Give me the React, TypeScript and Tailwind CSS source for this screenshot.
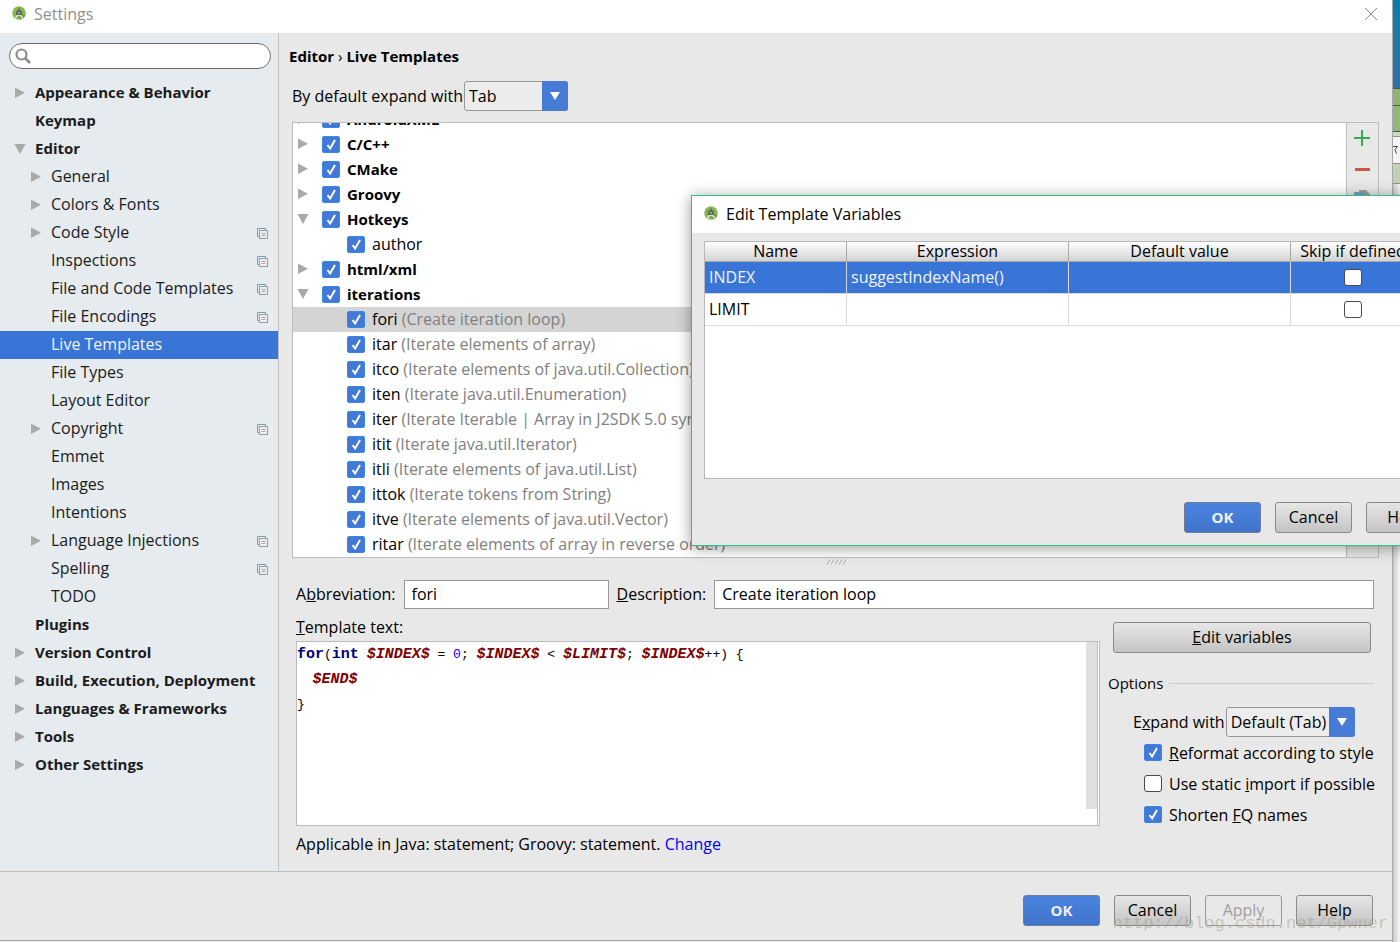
import type { ReactNode } from "react";

interface NavItem {
  label: string;
  level?: 1;
  arrow?: "right" | "down";
  shared?: boolean;
  selected?: boolean;
}

interface TemplateRow {
  label: string;
  note?: string;
  group?: "right" | "down";
  selected?: boolean;
}

const navItems: NavItem[] = [
  { label: "Appearance & Behavior", arrow: "right" },
  { label: "Keymap" },
  { label: "Editor", arrow: "down" },
  { label: "General", level: 1, arrow: "right" },
  { label: "Colors & Fonts", level: 1, arrow: "right" },
  { label: "Code Style", level: 1, arrow: "right", shared: true },
  { label: "Inspections", level: 1, shared: true },
  { label: "File and Code Templates", level: 1, shared: true },
  { label: "File Encodings", level: 1, shared: true },
  { label: "Live Templates", level: 1, selected: true },
  { label: "File Types", level: 1 },
  { label: "Layout Editor", level: 1 },
  { label: "Copyright", level: 1, arrow: "right", shared: true },
  { label: "Emmet", level: 1 },
  { label: "Images", level: 1 },
  { label: "Intentions", level: 1 },
  { label: "Language Injections", level: 1, arrow: "right", shared: true },
  { label: "Spelling", level: 1, shared: true },
  { label: "TODO", level: 1 },
  { label: "Plugins" },
  { label: "Version Control", arrow: "right" },
  { label: "Build, Execution, Deployment", arrow: "right" },
  { label: "Languages & Frameworks", arrow: "right" },
  { label: "Tools", arrow: "right" },
  { label: "Other Settings", arrow: "right" },
];

const templates: TemplateRow[] = [
  { label: "AndroidXML", group: "right" },
  { label: "C/C++", group: "right" },
  { label: "CMake", group: "right" },
  { label: "Groovy", group: "right" },
  { label: "Hotkeys", group: "down" },
  { label: "author" },
  { label: "html/xml", group: "right" },
  { label: "iterations", group: "down" },
  { label: "fori", note: "(Create iteration loop)", selected: true },
  { label: "itar", note: "(Iterate elements of array)" },
  { label: "itco", note: "(Iterate elements of java.util.Collection)" },
  { label: "iten", note: "(Iterate java.util.Enumeration)" },
  { label: "iter", note: "(Iterate Iterable | Array in J2SDK 5.0 syntax)" },
  { label: "itit", note: "(Iterate java.util.Iterator)" },
  { label: "itli", note: "(Iterate elements of java.util.List)" },
  { label: "ittok", note: "(Iterate tokens from String)" },
  { label: "itve", note: "(Iterate elements of java.util.Vector)" },
  { label: "ritar", note: "(Iterate elements of array in reverse order)" },
];

const variables = [
  { name: "INDEX", expression: "suggestIndexName()", selected: true },
  { name: "LIMIT", expression: "", selected: false },
];

function StudioIcon() {
  return (
    <svg className="h-4 w-4 shrink-0" viewBox="0 0 16 16" aria-hidden="true">
      <circle cx="8" cy="7" r="6.800" fill="#86b84f" />
      <path d="M8 7 14.400 9A7 7 0 0 1 10 13.600L6 9z" fill="#6f9f43" />
      <path d="M5 7a3 3 0 0 1 6 0v2H5z" fill="#5b6b5c" />
      <path d="M8 2.500v2" stroke="#4b5948" strokeWidth="1.200" />
      <circle cx="8" cy="6.800" r=".9" fill="#b9c4b4" />
      <path
        d="M6.500 9 3.500 14M9.500 9l3 5M4.500 11c1.200-1.200 2-1.500 3.500-1.500s2.300.3 3.500 1.500"
        stroke="#e4ebdf"
        strokeWidth="1.200"
        fill="none"
      />
    </svg>
  );
}

function Arrow({ dir }: { dir?: "right" | "down" }) {
  return (
    <svg className="h-3 w-3 shrink-0" viewBox="0 0 12 12" fill="#a9a9a9" aria-hidden="true">
      {dir === "right" && <path d="M1 .5v10.500L11 5.750z" />}
      {dir === "down" && <path d="M.5 1h11L6 11z" />}
    </svg>
  );
}

function SharedIcon() {
  return (
    <svg className="h-[11px] w-[11px] shrink-0" viewBox="0 0 11 11" fill="none" aria-hidden="true">
      <path d="M2 8.500H.5v-8h8V2" stroke="#6b9fbd" />
      <rect x="2.500" y="2.500" width="8" height="8" fill="#eceeef" stroke="#9c9ca0" />
      <path d="M4.500 5.500h4M4.500 7.500h4" stroke="#a6a6aa" />
    </svg>
  );
}

function Checkbox({ id, label, checked }: { id: string; label?: string; checked?: boolean }) {
  return (
    <span className="grid h-[17px] w-[18px] shrink-0">
      <input
        id={id}
        type="checkbox"
        aria-label={label}
        defaultChecked={checked}
        className="peer col-start-1 row-start-1 h-[17px] w-[18px] appearance-none rounded-[3px] border border-[#4a4a4a] bg-white checked:rounded-xs checked:border-[#3a86e8] checked:bg-[#4179d4]"
      />
      <svg
        className="pointer-events-none invisible col-start-1 row-start-1 h-[17px] w-[18px] peer-checked:visible"
        viewBox="0 0 18 17"
        fill="none"
        aria-hidden="true"
      >
        <path d="M5.500 9l2.600 3.400L13 4" stroke="#fff" strokeWidth="2" />
      </svg>
    </span>
  );
}

function Dropdown({ id, value, className }: { id: string; value: string; className: string }) {
  return (
    <span className={`relative flex h-[30px] ${className}`}>
      <select
        id={id}
        defaultValue={value}
        className="h-full w-full appearance-none rounded-[3px] border border-[#979797] bg-[#ececec] pr-6 pl-1"
      >
        <option>{value}</option>
      </select>
      <span className="pointer-events-none absolute inset-y-0 right-0 flex w-[26px] items-center justify-center rounded-r-[3px] bg-[#467cd6]">
        <svg className="h-2 w-2.5" viewBox="0 0 10 8" fill="#fff" aria-hidden="true">
          <path d="M0 0h10L5 8z" />
        </svg>
      </span>
    </span>
  );
}

function Button({
  children,
  primary,
  disabled,
  wide,
}: {
  children: ReactNode;
  primary?: boolean;
  disabled?: boolean;
  wide?: boolean;
}) {
  const size = wide ? "w-full" : "w-[77px]";
  const look = primary
    ? "border-[#6f7c94] bg-linear-to-b from-[#4a83df] to-[#4074cb] text-[15px] font-bold text-[#f0f0f0]"
    : disabled
      ? "border-[#979797] text-[#a0a0a0]"
      : "border-[#8a8a8a] bg-linear-to-b from-[#e6e6e6] to-[#c4c4c4]";
  return (
    <button
      type="button"
      disabled={disabled}
      className={`h-[31px] shrink-0 rounded-[3px] border pb-0.5 text-center ${size} ${look}`}
    >
      {children}
    </button>
  );
}

function TitleBar() {
  return (
    <header className="flex h-[33px] shrink-0 items-center justify-between bg-white pr-3.5 pb-1.5 pl-[11px] text-[#8f8f8f]">
      <div className="flex items-center gap-[7px]">
        <StudioIcon />
        <h1>Settings</h1>
      </div>
      <button type="button" aria-label="Close">
        <svg className="h-3.5 w-3.5" viewBox="0 0 14 14" stroke="#8a8a8a" aria-hidden="true">
          <path d="M1 1l12 12M13 1L1 13" />
        </svg>
      </button>
    </header>
  );
}

function Sidebar() {
  return (
    <aside className="w-[279px] shrink-0 border-r border-[#c0c0c0] bg-[#e5ebef] pt-2.5">
      <label className="mr-[7px] mb-2.5 ml-[9px] flex h-[26px] items-center rounded-full border border-[#6e6e6e] bg-white pl-[5px]">
        <svg className="h-4 w-4 shrink-0" viewBox="0 0 16 16" fill="none" stroke="#8c8c8c" aria-hidden="true">
          <circle cx="6.500" cy="6.500" r="5" strokeWidth="2.200" />
          <path d="M10 10l5 5" strokeWidth="2.600" />
        </svg>
        <input type="search" aria-label="Search settings" className="w-full px-2 outline-none" />
      </label>
      <nav>
        {navItems.map((item) => (
          <a
            key={item.label}
            href="#"
            className={`flex h-7 items-center pr-2.5 ${item.level ? "pl-[30px]" : "pl-3.5 text-[15px] font-bold"} ${
              item.selected ? "bg-[#3975d7] text-[#f0f4fa]" : "text-[#1c1c1c]"
            }`}
          >
            <Arrow dir={item.arrow} />
            <span className="ml-[9px] grow pb-0.5 leading-5 whitespace-nowrap">{item.label}</span>
            {item.shared && <SharedIcon />}
          </a>
        ))}
      </nav>
    </aside>
  );
}

function TemplateList() {
  return (
    <div className="flex border border-[#bdbdbd] bg-white">
      <div className="min-w-0 grow overflow-hidden">
        {/* scrolled down a little, so the first group is cut off */}
        <ul className="-mt-4">
          {templates.map((row) => (
            <li
              key={row.label}
              className={`flex h-[25px] items-center pb-px whitespace-nowrap ${
                row.group ? "pl-1 text-[15px] font-bold" : "pl-[54px]"
              } ${row.selected ? "bg-[#d4d4d4]" : ""}`}
            >
              {row.group && (
                <span className="mr-[13px] flex">
                  <Arrow dir={row.group} />
                </span>
              )}
              <Checkbox id={`tpl-${row.label}`} checked />
              <label htmlFor={`tpl-${row.label}`} className="ml-[7px] leading-5">
                {row.label} {row.note && <span className="text-[#808080]">{row.note}</span>}
              </label>
            </li>
          ))}
        </ul>
      </div>
      <div className="flex w-8 shrink-0 flex-col items-center gap-3.5 border-l border-[#bdbdbd] bg-[#e8e8e8] pt-[7px] pr-px">
        <button type="button" aria-label="Add">
          <svg className="h-4 w-4" viewBox="0 0 16 16" stroke="#2fae55" strokeWidth="2" aria-hidden="true">
            <path d="M8 0v16M0 8h16" />
          </svg>
        </button>
        <button type="button" aria-label="Remove">
          <svg className="h-4 w-4" viewBox="0 0 16 16" aria-hidden="true">
            <path d="M1 8h15v3H1z" fill="#cc5546" />
          </svg>
        </button>
        <button type="button" aria-label="Copy">
          <svg className="h-4 w-4" viewBox="0 0 16 16" aria-hidden="true">
            <path d="M5 0h7l4 4v10H5z" fill="#a0a0a0" />
            <path d="M0 2h8l2 3v11H0z" fill="#7d9fc0" />
          </svg>
        </button>
      </div>
    </div>
  );
}

function Kw({ children }: { children: ReactNode }) {
  return <b className="text-[15px] text-[#000080]">{children}</b>;
}

function Var({ children }: { children: ReactNode }) {
  return <b className="text-[15px] text-[#800000] italic">{children}</b>;
}

function TemplateEditor() {
  return (
    <div className="flex h-[185px] border border-[#bdbdbd] bg-white">
      <div
        role="textbox"
        aria-labelledby="template-text"
        aria-multiline="true"
        contentEditable
        suppressContentEditableWarning
        spellCheck={false}
        className="grow font-['Liberation_Mono',monospace] text-[13px] leading-[25px] whitespace-pre text-black outline-none"
      >
        <div className="h-[25px]">
          <Kw>for</Kw>(<Kw>int</Kw> <Var>$INDEX$</Var> = <span className="text-[#0000ff]">0</span>;{" "}
          <Var>$INDEX$</Var> &lt; <Var>$LIMIT$</Var>; <Var>$INDEX$</Var>++) {"{"}
        </div>
        <div className="h-[25px]">
          {"  "}
          <Var>$END$</Var>
        </div>
        <div className="h-[25px]">{"}"}</div>
      </div>
      <div className="mr-px w-3 border-r border-[#bdbdbd]">
        <div className="h-[167px] bg-[#e0e0e0]" />
      </div>
    </div>
  );
}

function Options() {
  return (
    <section className="w-[266px] shrink-0">
      <div className="pr-[3px] pl-[5px]">
        <Button wide>
          <u>E</u>dit variables
        </Button>
      </div>
      <div className="mt-5 flex items-center gap-1.5">
        <h3 className="text-[15px] leading-5">Options</h3>
        <span className="h-px grow bg-[#cccccc]" />
      </div>
      <div className="mt-3.5 flex items-center gap-px pl-[25px]">
        <label htmlFor="expand-with" className="whitespace-nowrap">
          E<u>x</u>pand with
        </label>
        <Dropdown id="expand-with" value="Default (Tab)" className="w-[129px]" />
      </div>
      <div className="flex flex-col pl-9 whitespace-nowrap">
        <div className="flex h-[31px] items-center gap-[7px]">
          <Checkbox id="reformat" checked />
          <label htmlFor="reformat">
            <u>R</u>eformat according to style
          </label>
        </div>
        <div className="flex h-[31px] items-center gap-[7px]">
          <Checkbox id="static-import" />
          <label htmlFor="static-import">
            Use static <u>i</u>mport if possible
          </label>
        </div>
        <div className="flex h-[31px] items-center gap-[7px]">
          <Checkbox id="shorten-fq" checked />
          <label htmlFor="shorten-fq">
            Shorten <u>F</u>Q names
          </label>
        </div>
      </div>
    </section>
  );
}

function LiveTemplates() {
  return (
    <main className="min-w-0 grow px-[13px] pt-[13px]">
      <h2 className="-ml-[3px] text-[15px] leading-5 font-bold">
        Editor <span className="font-normal">›</span> Live Templates
      </h2>
      <div className="mt-[15px] mb-[11px] flex items-center gap-px">
        <label htmlFor="default-expand">By default expand with</label>
        <Dropdown id="default-expand" value="Tab" className="w-[104px]" />
      </div>

      <TemplateList />

      <div className="flex h-[22px] justify-center pt-px">
        <svg className="h-1.5 w-5" viewBox="0 0 20 6" stroke="#a8a8a8" aria-hidden="true">
          <path d="M1 5.500l3-5M5 5.500l3-5M9 5.500l3-5M13 5.500l3-5M17 5.500l3-5" />
        </svg>
      </div>

      <div className="flex items-center gap-2 pr-[5px] pl-1">
        <label htmlFor="abbreviation" className="pb-px">
          A<u>b</u>breviation:
        </label>
        <input
          id="abbreviation"
          defaultValue="fori"
          className="h-[29px] w-[205px] border border-[#979797] bg-white px-[7px] pb-px"
        />
        <label htmlFor="description" className="pb-px">
          <u>D</u>escription:
        </label>
        <input
          id="description"
          defaultValue="Create iteration loop"
          className="h-[29px] min-w-0 grow border border-[#979797] bg-white px-[7px] pb-px"
        />
      </div>

      <div className="mt-2 flex gap-2 pr-[5px] pl-1">
        <div className="min-w-0 grow">
          <div id="template-text" className="mb-1">
            <u>T</u>emplate text:
          </div>
          <TemplateEditor />
          <p className="mt-2">
            Applicable in Java: statement; Groovy: statement.{" "}
            <a href="#" className="text-[#0000ee]">
              Change
            </a>
          </p>
        </div>
        <div className="pt-[5px]">
          <Options />
        </div>
      </div>
    </main>
  );
}

function VariablesDialog() {
  const cell = "border-r border-b border-[#d9d9d9] px-1 pt-0 pb-0.5";
  return (
    <div
      role="dialog"
      aria-labelledby="dialog-title"
      className="absolute top-[195px] left-[691px] flex w-[772px] flex-col border border-[#2fbf83] bg-[#e8e8e8] shadow-[0_2px_14px_rgba(0,0,0,0.4)]"
    >
      <header className="flex h-[37px] items-center gap-[7px] bg-white pb-px pl-[11px]">
        <StudioIcon />
        <h2 id="dialog-title">Edit Template Variables</h2>
      </header>
      <div className="mx-3 mt-2 h-[238px] w-[712px] border border-[#b8b8b8] bg-white">
        <table className="w-full table-fixed border-separate border-spacing-0">
          <thead>
            <tr className="h-5 bg-linear-to-b from-white to-[#d0d0d0] leading-[19px]">
              <th className="w-[142px] border-r border-b border-[#a8a8a8] p-0 font-normal">Name</th>
              <th className="w-[222px] border-r border-b border-[#a8a8a8] p-0 font-normal">Expression</th>
              <th className="w-[222px] border-r border-b border-[#a8a8a8] p-0 font-normal">Default value</th>
              <th className="border-b border-[#a8a8a8] p-0 font-normal whitespace-nowrap">Skip if defined</th>
            </tr>
          </thead>
          <tbody>
            {variables.map((v) => (
              <tr key={v.name} className={`h-8 ${v.selected ? "bg-[#3975d7] text-[#f0f4fa]" : ""}`}>
                <td className={cell}>{v.name}</td>
                <td className={cell}>{v.expression}</td>
                <td className={cell} />
                <td className="border-b border-[#d9d9d9] p-0">
                  <span className="flex justify-center">
                    <Checkbox id={`skip-${v.name}`} label={`Skip ${v.name} if defined`} />
                  </span>
                </td>
              </tr>
            ))}
          </tbody>
        </table>
      </div>
      <div className="mt-[23px] mb-3 flex justify-end gap-3.5 pr-[19px]">
        <Button primary>OK</Button>
        <Button>Cancel</Button>
        <Button>Help</Button>
      </div>
    </div>
  );
}

// Edge of the desktop and of the browser that sit behind the settings window
function Backdrop() {
  return (
    <div className="flex w-[7px] shrink-0 flex-col overflow-hidden bg-[#f6f6f6]" aria-hidden="true">
      <div className="h-[88px] bg-linear-to-b from-[#0080ad] to-[#2f70a3]" />
      <div className="h-[18px] border-y border-[#4c5a40] bg-[#8fb277]" />
      <div className="h-[26px] border-b border-[#4c5a40] bg-[#93b67a]" />
      <div className="h-1 bg-[#cddcc2]" />
      <div className="flex h-7 items-center border-y border-[#8a9480] bg-[#f4f4f4]">
        <svg className="h-2.5 w-1.5" viewBox="0 0 6 10" fill="none" stroke="#444" aria-hidden="true">
          <path d="M0 1.500h4.500L2 4.500l1.500 4" />
        </svg>
      </div>
      <div className="h-5 border-b border-[#8a9480] bg-[#c3d0b8]" />
      <div className="grow bg-linear-to-r from-[#c8c8c8] to-[#f8f8f8]" />
    </div>
  );
}

export default function App() {
  return (
    <div className="relative flex min-h-screen overflow-hidden bg-[#d5d5d5] font-['Open_Sans',sans-serif] text-[16px] leading-5 text-black">
      <div className="flex min-w-0 grow flex-col border-r border-[#a8a8a8] bg-[#e8e8e8]">
        <TitleBar />
        <div className="flex grow">
          <Sidebar />
          <LiveTemplates />
        </div>
        <footer className="mb-px flex justify-end gap-3.5 border-y border-t-[#c0c0c0] border-b-[#a8a8a8] pt-[23px] pr-[19px] pb-3.5">
          <Button primary>OK</Button>
          <Button>Cancel</Button>
          <Button disabled>Apply</Button>
          <Button>Help</Button>
        </footer>
      </div>
      <Backdrop />
      <VariablesDialog />
      <div className="pointer-events-none absolute right-3 bottom-2 font-['Liberation_Mono',monospace] text-[17px] text-[#a0a090]/50">
        http://blog.csdn.net/Gpwner
      </div>
    </div>
  );
}
